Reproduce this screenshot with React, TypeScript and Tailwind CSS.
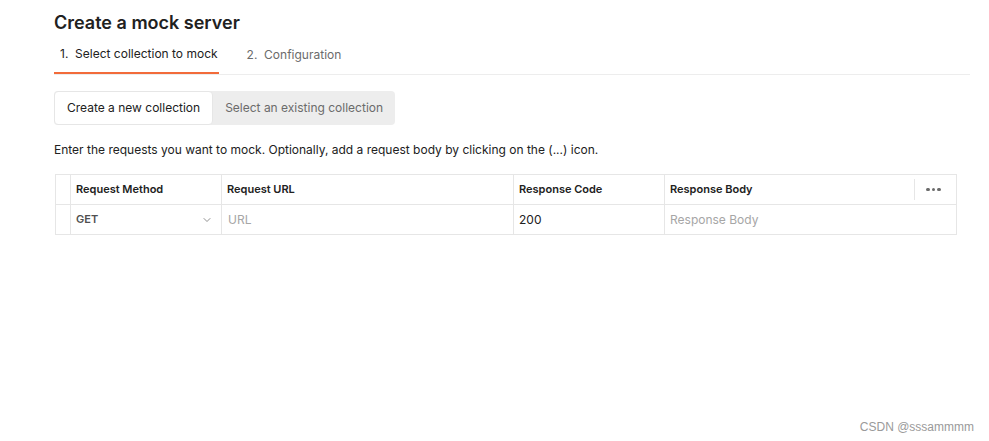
import { ChevronDown } from "lucide-react";

export default function App() {
  const cols = [
    { label: "Request Method", w: "w-[151px]" },
    { label: "Request URL", w: "w-[292px]" },
    { label: "Response Code", w: "w-[151px]" },
    { label: "Response Body", w: "flex-1" },
  ];

  return (
    <div className="w-[989px] h-[441px] bg-white font-['Inter',sans-serif] text-[#212121] relative overflow-hidden">
      <div className="pl-[54px] pr-[19px] pt-[11px]">
        <h1 className="text-[18px] leading-[24px] font-semibold">Create a mock server</h1>

        {/* steps */}
        <div className="flex border-b border-[#ededed] h-[40px]">
          <div className="h-[39px] flex items-center pl-[6px] pr-[1px] border-b-2 border-[#f26b3a] text-[12px]">
            1.&nbsp; Select collection to mock
          </div>
          <div className="h-[39px] flex items-center pl-[28px] text-[12px] text-[#6b6b6b]">
            2.&nbsp; Configuration
          </div>
        </div>

        {/* segmented control */}
        <div className="mt-[16px] flex w-fit h-[34px] bg-[#ededed] rounded-[4px] text-[12px]">
          <div className="h-full flex items-center px-[12px] bg-white border border-[#e6e6e6] rounded-[4px]">
            Create a new collection
          </div>
          <div className="h-full flex items-center px-[12px] text-[#6b6b6b]">
            Select an existing collection
          </div>
        </div>

        <p className="mt-[17px] text-[12px] leading-[16px]">
          Enter the requests you want to mock. Optionally, add a request body by clicking on the (...) icon.
        </p>

        {/* table */}
        <div className="mt-[16px] ml-[1px] w-[902px] border border-[#e6e6e6] text-[11px]">
          <div className="flex h-[30px] border-b border-[#e6e6e6]">
            <div className="w-[15px] border-r border-[#e6e6e6]" />
            {cols.map((c, i) => (
              <div
                key={c.label}
                className={`${c.w} flex items-center pl-[5px] font-semibold ${i < 3 ? "border-r border-[#e6e6e6]" : ""}`}
              >
                {c.label}
                {i === 3 && (
                  <div className="ml-auto flex items-center h-[21px]">
                    <div className="w-px h-full bg-[#e6e6e6]" />
                    <div className="w-[41px] flex pl-[11px] gap-[2px]">
                      <span className="w-[3.5px] h-[3.5px] rounded-full bg-[#6b6b6b]" />
                      <span className="w-[3.5px] h-[3.5px] rounded-full bg-[#6b6b6b]" />
                      <span className="w-[3.5px] h-[3.5px] rounded-full bg-[#6b6b6b]" />
                    </div>
                  </div>
                )}
              </div>
            ))}
          </div>
          <div className="flex h-[29px]">
            <div className="w-[15px] border-r border-[#e6e6e6]" />
            <div className="w-[151px] flex items-center pl-[5px] pr-[8px] border-r border-[#e6e6e6] font-semibold text-[#505050]">
              GET
              <ChevronDown className="ml-auto w-[12px] h-[12px] text-[#6b6b6b]" strokeWidth={1.5} />
            </div>
            <div className="w-[292px] flex items-center pl-[6px] border-r border-[#e6e6e6] text-[12px] text-[#a6a6a6]">
              URL
            </div>
            <div className="w-[151px] flex items-center pl-[5px] border-r border-[#e6e6e6] text-[12px]">
              200
            </div>
            <div className="flex-1 flex items-center pl-[5px] text-[12px] text-[#a6a6a6]">
              Response Body
            </div>
          </div>
        </div>
      </div>

      <div className="absolute right-[15px] bottom-[5px] text-[12px] text-[#9a9a9a] font-['Liberation_Sans',sans-serif]">
        CSDN @sssammmm
      </div>
    </div>
  );
}
